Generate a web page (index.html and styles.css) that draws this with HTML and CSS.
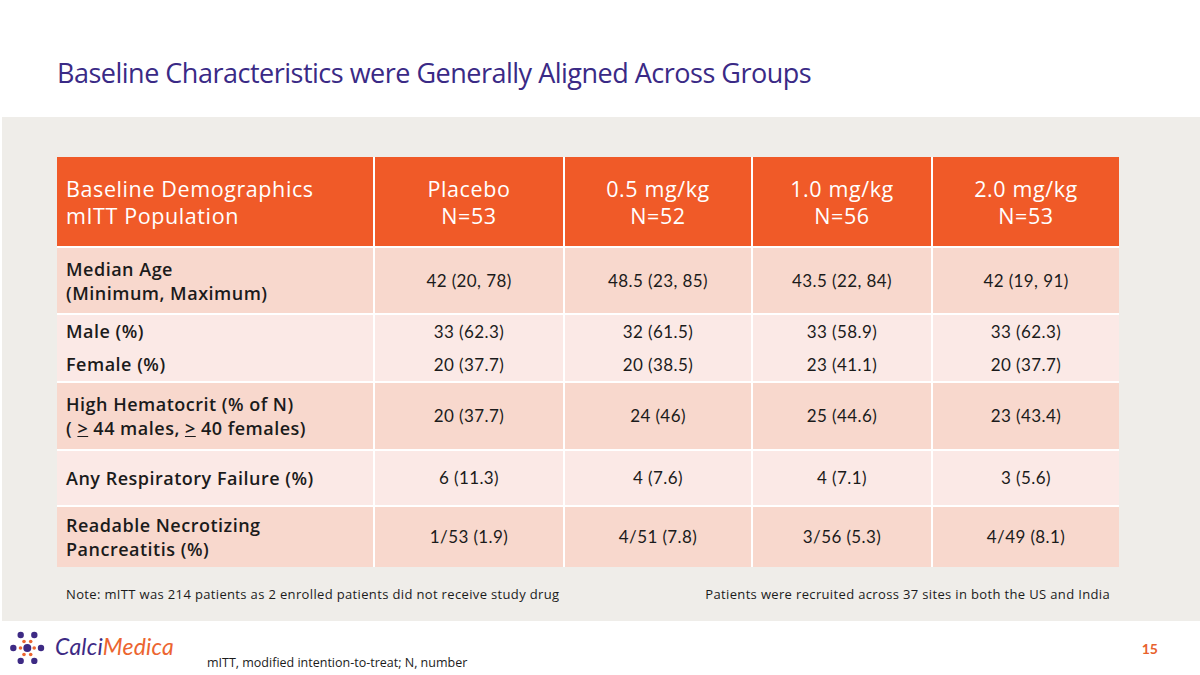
FILE: index.html
```html
<!DOCTYPE html>
<html>
<head>
<meta charset="utf-8">
<link rel="stylesheet" href="styles.css">
</head>
<body>
<div class="slide">
  <header class="title-bar">
    <h1 class="title">Baseline Characteristics were Generally Aligned Across Groups</h1>
  </header>
  <section class="panel">
    <table class="data">
      <colgroup>
        <col class="c1"><col class="c2"><col class="c3"><col class="c4"><col class="c5">
      </colgroup>
      <thead>
        <tr class="head">
          <th class="lbl">Baseline Demographics<br>mITT Population</th>
          <th>Placebo<br>N=53</th>
          <th>0.5 mg/kg<br>N=52</th>
          <th>1.0 mg/kg<br>N=56</th>
          <th>2.0 mg/kg<br>N=53</th>
        </tr>
      </thead>
      <tbody>
        <tr class="dark r1">
          <td class="lbl">Median Age<br>(Minimum, Maximum)</td>
          <td>42 (20, 78)</td>
          <td>48.5 (23, 85)</td>
          <td>43.5 (22, 84)</td>
          <td>42 (19, 91)</td>
        </tr>
        <tr class="light r2">
          <td class="lbl">Male (%)<br>Female (%)</td>
          <td>33 (62.3)<br>20 (37.7)</td>
          <td>32 (61.5)<br>20 (38.5)</td>
          <td>33 (58.9)<br>23 (41.1)</td>
          <td>33 (62.3)<br>20 (37.7)</td>
        </tr>
        <tr class="dark r3">
          <td class="lbl">High Hematocrit (% of N)<br>( <u>&gt;</u> 44 males, <u>&gt;</u> 40 females)</td>
          <td>20 (37.7)</td>
          <td>24 (46)</td>
          <td>25 (44.6)</td>
          <td>23 (43.4)</td>
        </tr>
        <tr class="light r4">
          <td class="lbl">Any Respiratory Failure (%)</td>
          <td>6 (11.3)</td>
          <td>4 (7.6)</td>
          <td>4 (7.1)</td>
          <td>3 (5.6)</td>
        </tr>
        <tr class="dark r5">
          <td class="lbl">Readable Necrotizing<br>Pancreatitis (%)</td>
          <td>1/53 (1.9)</td>
          <td>4/51 (7.8)</td>
          <td>3/56 (5.3)</td>
          <td>4/49 (8.1)</td>
        </tr>
      </tbody>
    </table>
    <div class="notes">
      <span>Note: mITT was 214 patients as 2 enrolled patients did not receive study drug</span>
      <span>Patients were recruited across 37 sites in both the US and India</span>
    </div>
  </section>
  <footer class="foot">
    <div class="logo">
      <svg class="mark" width="40" height="36" viewBox="0 0 40 36">
        <g fill="#3d2a84">
          <circle cx="11.7" cy="7" r="3.2"/>
          <circle cx="25.3" cy="7" r="3.2"/>
          <circle cx="4.3" cy="20" r="3.2"/>
          <circle cx="18.3" cy="20" r="4"/>
          <circle cx="32" cy="20" r="3.2"/>
          <circle cx="11.7" cy="33" r="3.2"/>
          <circle cx="25.3" cy="33" r="3.2"/>
        </g>
        <g fill="#ec6530">
          <circle cx="15" cy="13.5" r="1.8"/>
          <circle cx="21.7" cy="13.5" r="1.8"/>
          <circle cx="11.5" cy="20" r="1.8"/>
          <circle cx="25.2" cy="20" r="1.8"/>
          <circle cx="15" cy="26.5" r="1.8"/>
          <circle cx="21.7" cy="26.5" r="1.8"/>
        </g>
      </svg>
      <span class="brand"><span class="calci">Calci</span><span class="medica">Medica</span></span>
    </div>
    <div class="footnote">mITT, modified intention-to-treat; N, number</div>
    <div class="page">15</div>
  </footer>
</div>
</body>
</html>
```

FILE: styles.css
```css
* { box-sizing: border-box; }
html, body { margin: 0; padding: 0; background: #fff; }
body { width: 1200px; height: 675px; overflow: hidden; font-family: "Open Sans", Lato, sans-serif; color: #1b1b1b; }

.slide { width: 1200px; height: 675px; display: flex; flex-direction: column; }

.title-bar { height: 117px; padding: 55px 0 0 57px; }
.title {
  margin: 0;
  font-family: "Open Sans", "Noto Sans", sans-serif;
  font-weight: 400;
  font-size: 27px;
  line-height: 36px;
  letter-spacing: -0.5px;
  color: #3a2a86;
}

.panel {
  height: 504px;
  margin-left: 2px;
  background: #efede9;
  padding: 40px 0 0 55px;
}

.data {
  border-collapse: collapse;
  table-layout: fixed;
  width: 1062px;
}
.c1 { width: 317px; }
.c2 { width: 190px; }
.c3 { width: 188px; }
.c4 { width: 180px; }
.c5 { width: 187px; }

.data th, .data td {
  padding: 0;
  text-align: center;
  vertical-align: middle;
  border-left: 2px solid #fff;
}
.data th:first-child, .data td:first-child { border-left: none; }
.data tbody tr { border-top: 2px solid #fff; }

.data .lbl { text-align: left; padding-left: 9px; }

.head { background: #f05a28; height: 90px; }
.head th {
  color: #fff;
  font-family: "Open Sans", sans-serif;
  font-weight: 400;
  font-size: 21.5px;
  line-height: 27px;
  letter-spacing: 0.6px;
}

.data td {
  font-family: Lato, sans-serif;
  font-size: 17px;
  line-height: 24px;
  letter-spacing: 0.4px;
}
.data td.lbl {
  font-family: "Open Sans", sans-serif;
  font-weight: 600;
  font-size: 18px;
  letter-spacing: 0.5px;
}

.dark { background: #f8d8cd; }
.light { background: #fbe9e6; }

.r1 { height: 67px; }
.r2 { height: 67px; }
.r2 td { line-height: 33px; }
.r3 { height: 68px; }
.r4 { height: 56px; }
.r5 { height: 61px; }

.notes {
  width: 1062px;
  display: flex;
  justify-content: space-between;
  padding: 18px 9px 0 9px;
  font-family: "Open Sans", sans-serif;
  font-size: 13px;
  line-height: 18px;
  letter-spacing: 0.35px;
}

.foot {
  flex: 1;
  display: flex;
  align-items: flex-start;
}
.logo { display: flex; align-items: center; padding: 7px 0 0 9px; }
.mark { display: block; }
.brand {
  margin-left: 6px;
  font-family: Lato, sans-serif;
  font-style: italic;
  font-weight: 400;
  font-size: 23px;
  letter-spacing: 0.2px;
}
.calci { color: #3d2a84; }
.medica { color: #ec6530; }

.footnote {
  margin: 34px 0 0 33px;
  font-family: "Open Sans", sans-serif;
  font-size: 12.5px;
  line-height: 16px;
}
.page {
  margin: 19px 0 0 auto;
  padding-right: 42px;
  color: #e8612c;
  font-family: Lato, sans-serif;
  font-weight: 700;
  font-size: 14px;
  line-height: 18px;
}
```
